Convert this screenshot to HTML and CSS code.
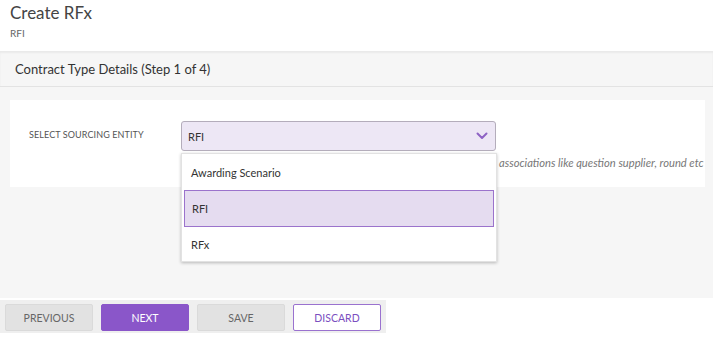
FILE: index.html
```html
<!DOCTYPE html>
<html lang="en">
<head>
  <meta charset="UTF-8" />
  <title>Create RFx</title>
  <link rel="stylesheet" href="styles.css">
</head>
<body>

  <div class="page-head">
    <h1>Create RFx</h1>
    <div class="sub">RFI</div>
  </div>

  <div class="step-bar">Contract Type Details (Step 1 of 4)</div>

  <div class="content">
    <div class="card">
      <div class="label">SELECT SOURCING ENTITY</div>
      <div class="field">
        <div class="select">
          <span>RFI</span>
          <svg class="chev" width="12" height="8" viewBox="0 0 12 8"><path d="M1.5 1.5 L6 6 L10.5 1.5" fill="none" stroke="#8e63c4" stroke-width="2" stroke-linecap="round" stroke-linejoin="round"/></svg>
        </div>
        <p class="help">associations like question supplier, round etc</p>
        <ul class="dropdown">
          <li>Awarding Scenario</li>
          <li class="active">RFI</li>
          <li>RFx</li>
        </ul>
      </div>
    </div>
  </div>

  <div class="actions">
    <button class="btn grey">PREVIOUS</button>
    <button class="btn primary">NEXT</button>
    <button class="btn grey">SAVE</button>
    <button class="btn outline">DISCARD</button>
  </div>

</body>
</html>
```

FILE: styles.css
```css
body { margin: 0; font-family: Lato, "Open Sans", sans-serif; color: #333; background: #fff; }
.page-head { height: 51px; box-sizing: border-box; padding: 3px 10px 0; }
.page-head h1 { margin: 0; font-size: 17px; font-weight: 400; color: #444; line-height: 20px; }
.page-head .sub { font-size: 10px; color: #666; margin-top: 4px; }
.step-bar { width: 713px; height: 36px; box-sizing: border-box; background: #f6f6f6; border-bottom: 1px solid #e3e3e3; box-shadow: inset 0 2px 2px rgba(0,0,0,0.05); padding-left: 15px; display: flex; align-items: center; font-size: 13px; color: #333; }
.content { width: 713px; height: 211px; box-sizing: border-box; background: #f6f6f6; padding: 13px 8px 0 10px; }
.card { background: #fff; height: 87px; box-sizing: border-box; display: flex; padding: 21px 0 0 19px; }
.label { width: 152px; font-size: 9px; color: #555; letter-spacing: 0.1px; padding-top: 8px; }
.field { position: relative; width: 315px; }
.select { height: 30px; box-sizing: border-box; background: #ede7f5; border: 1px solid #b4adbb; border-radius: 3px; display: flex; align-items: center; justify-content: space-between; padding: 0 7px 0 6px; font-size: 11px; color: #333; }
.help { position: absolute; top: 35px; left: 318px; margin: 0; white-space: nowrap; font-size: 11.2px; font-style: italic; color: #777; }
.dropdown { position: absolute; top: 32px; left: 0; width: 316px; height: 109px; box-sizing: border-box; margin: 0; padding: 1px 2px 2px; list-style: none; background: #fff; border: 1px solid #e2e2e2; box-shadow: 0 1px 3px rgba(0,0,0,0.25); font-size: 11px; }
.dropdown li { height: 35px; display: flex; align-items: center; padding-left: 7px; box-sizing: border-box; color: #333; }
.dropdown li.active { background: #e5dcf0; border: 1px solid #9b73cc; height: 37px; }
.actions { margin-top: 2px; width: 386px; height: 33px; box-sizing: border-box; background: #efefef; padding: 4px 5px; display: flex; gap: 8px; }
.btn { width: 88px; height: 27px; border-radius: 2px; font-family: Lato, sans-serif; font-size: 10.5px; cursor: pointer; padding: 0; }
.btn.grey { background: #e2e2e2; border: 1px solid #dadada; color: #666; }
.btn.primary { background: #8a56c9; border: 1px solid #8a56c9; color: #fff; }
.btn.outline { background: #fff; border: 1px solid #9a72cf; color: #7b4fbf; }
```
